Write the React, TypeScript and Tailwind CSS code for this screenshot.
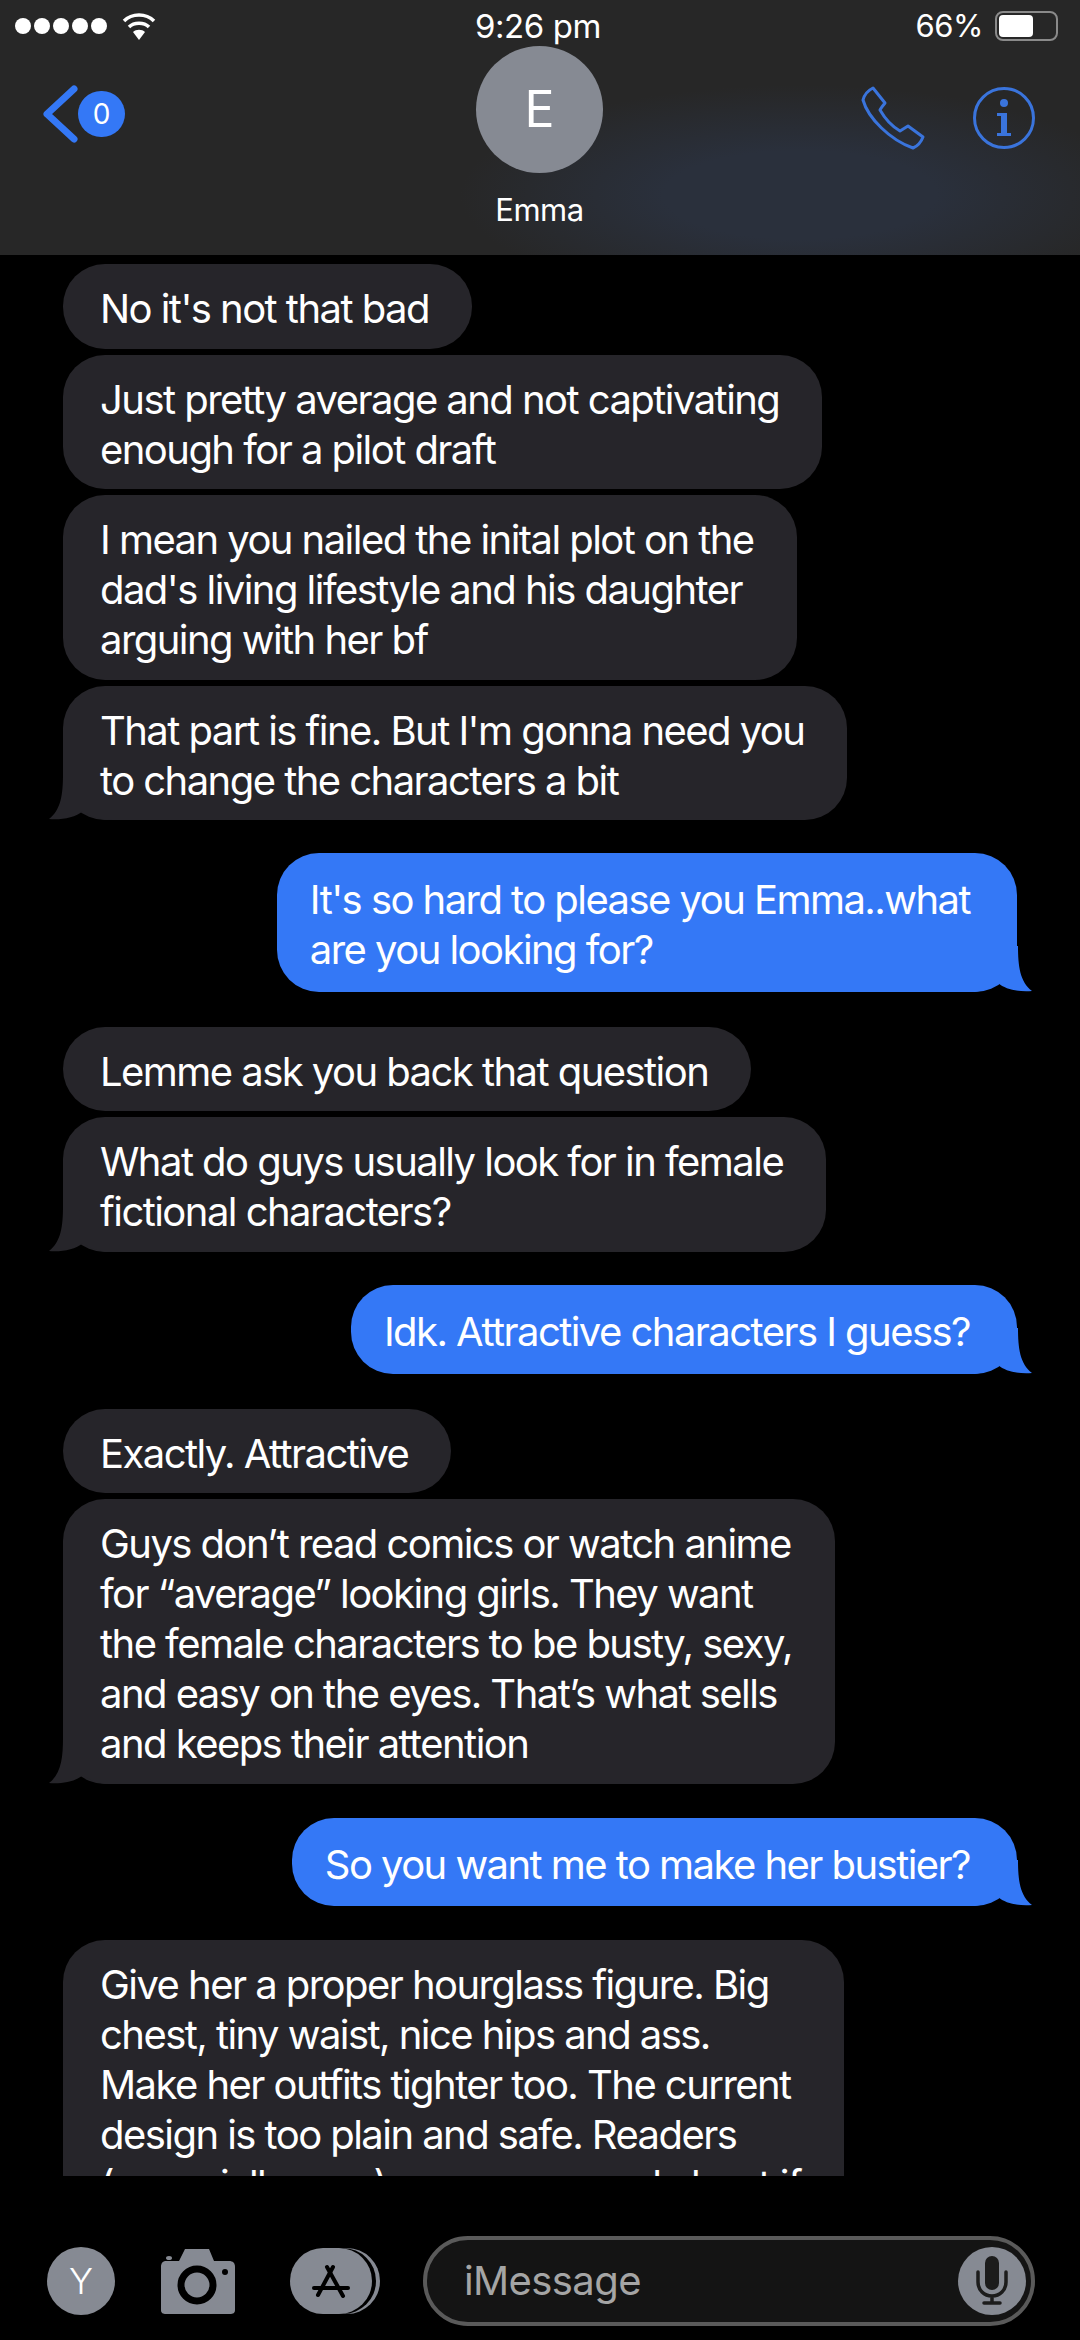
import React from 'react';

const font = "font-['Inter','Liberation_Sans',sans-serif]";

const Tail = ({ sent }: { sent: boolean }) => (
    <svg
        viewBox="0 0 64 46"
        className={`absolute bottom-0 h-[46px] w-[64px] ${sent ? '-right-[15px] -scale-x-100' : '-left-[14px]'}`}
        fill={sent ? '#3478f6' : '#26252a'}
    >
        <path d="M14 0C14 20 12 36 0 45C12 46 26 44 34 37C42 43 50 46 64 46V0Z" />
    </svg>
);

const Bubble = ({ text, sent = false, tail = false, className = '' }: { text: string; sent?: boolean; tail?: boolean; className?: string }) => (
    <div
        className={`relative w-fit whitespace-pre rounded-[42px] text-[40px] leading-[50px] tracking-[-1.55px] text-white ${
            sent ? 'self-end bg-[#3478f6] pb-[16.5px] pl-[33px] pr-[47px] pt-[22px]' : 'bg-[#26252a] pb-[14.5px] pl-[37px] pr-[43px] pt-[20px]'
        } ${className}`}
    >
        {tail && <Tail sent={sent} />}
        <span className="relative">{text}</span>
    </div>
);

const StatusBar = () => (
    <div className="flex h-[46px] items-center justify-between pl-[15px] pr-[22px] pt-[6px] text-white">
        <div className="flex w-[300px] items-center">
            <div className="flex gap-[3px]">
                <span className="h-[16px] w-[16px] rounded-full bg-white" />
                <span className="h-[16px] w-[16px] rounded-full bg-white" />
                <span className="h-[16px] w-[16px] rounded-full bg-white" />
                <span className="h-[16px] w-[16px] rounded-full bg-white" />
                <span className="h-[16px] w-[16px] rounded-full bg-white" />
            </div>
            <svg viewBox="0 0 34 28" className="ml-[15px] h-[28px] w-[34px]" fill="none" stroke="#fff" strokeWidth="3.5">
                <path d="M2 9C10 1 24 1 32 9" />
                <path d="M7 15C12 10 22 10 27 15" />
                <path d="M17 28L11 20C14 17 20 17 23 20Z" fill="#fff" stroke="none" />
            </svg>
        </div>
        <div className="ml-[3px] text-[33px] leading-[40px] tracking-[-0.4px]">9:26 pm</div>
        <div className="flex w-[300px] items-center justify-end">
            <span className="text-[31px] leading-[40px] tracking-[-0.5px]">66%</span>
            <div className="ml-[12px] flex h-[30px] w-[63px] rounded-[8px] border-2 border-[#8a8a8a] p-[2px]">
                <div className="h-full w-[62%] rounded-[4px] bg-white" />
            </div>
        </div>
    </div>
);

const Header = () => (
    <div className="h-[255px] shrink-0 bg-[#272727] bg-[radial-gradient(ellipse_340px_110px_at_800px_195px,#2a303c_40%,#272727_100%)]">
        <StatusBar />
        <div className="flex items-start justify-between pl-[42px] pr-[45px] pt-[39px]">
            <div className="flex w-[200px] items-center">
                <svg viewBox="0 0 36 58" className="h-[58px] w-[36px]" fill="none" stroke="#3478f6" strokeWidth="7" strokeLinecap="round" strokeLinejoin="round">
                    <path d="M32 4L5 29L32 54" />
                </svg>
                <div className="flex h-[46px] w-[47px] items-center justify-center rounded-full bg-[#3478f6] text-[28px] text-white">0</div>
            </div>
            <div className="-mt-[39px] ml-[2px] flex flex-col items-center">
                <div className="flex h-[127px] w-[127px] items-center justify-center rounded-full bg-[#868a93] text-[50px] text-white">E</div>
                <div className="mt-[17px] text-[31px] leading-[40px] tracking-[-0.5px] text-white">Emma</div>
            </div>
            <div className="flex w-[200px] items-center justify-end gap-[46px]">
                <svg viewBox="20 15 67 65" className="h-[65px] w-[67px]" fill="none" stroke="#3a74dc" strokeWidth="3" strokeLinejoin="round">
                    <path d="M33 18L45 33Q41 38 40 40Q48 54 60 61L68 56L83 67Q80 75 73 78C50 70 28 48 23 30Q25 22 33 18Z" />
                </svg>
                <svg viewBox="0 0 62 62" className="h-[62px] w-[62px]">
                    <circle cx="31" cy="31" r="29.5" fill="none" stroke="#3a74dc" strokeWidth="3" />
                    <circle cx="31" cy="16" r="4" fill="#3a74dc" />
                    <path d="M24 26H34V46H38V49H24V46H28V29H24Z" fill="#3a74dc" />
                </svg>
            </div>
        </div>
    </div>
);

const Composer = () => (
    <div className="flex h-[164px] shrink-0 items-center pl-[47px] pt-[46px]">
        <div className="flex h-[68px] w-[68px] items-center justify-center rounded-full bg-[#868a93] text-[36px] font-light text-white">Y</div>
        <svg viewBox="20 12 78 67" className="ml-[44px] h-[67px] w-[78px]">
            <path
                fill="#868a93"
                d="M46 13H70L75 25H90C94 25 96 27 96 31V74C96 77 94 78 91 78H27C24 78 22 77 22 74V31C22 27 24 25 27 25H40Z"
            />
            <circle cx="58" cy="49" r="16" fill="none" stroke="#000" strokeWidth="7" />
            <circle cx="86" cy="36" r="3" fill="#000" />
            <ellipse cx="30" cy="22" rx="3" ry="2" fill="#868a93" />
        </svg>
        <div className="relative ml-[53px] h-[66px] w-[91px]">
            <div className="absolute left-[13px] top-0 h-[66px] w-[77px] rounded-full bg-[#868a93]" />
            <div className="absolute left-[9px] top-0 h-[66px] w-[77px] rounded-full bg-[#000]" />
            <div className="absolute left-0 top-0 flex h-[66px] w-[82px] items-center justify-center rounded-full bg-[#868a93]">
                <svg viewBox="170 26 42 36" className="h-[36px] w-[42px]" fill="none" stroke="#000" strokeWidth="4" strokeLinecap="round">
                    <path d="M193 30L178 58" />
                    <path d="M187 30L203 59" />
                    <path d="M174 51H208" />
                </svg>
            </div>
        </div>
        <div className="ml-[42px] flex h-[90px] w-[612px] items-center justify-between rounded-full border-[4px] border-[#5a5a5a] bg-[#141414] pl-[37px] pr-[5px]">
            <span className="text-[40px] tracking-[-0.6px] text-[#a5a5a5]">iMessage</span>
            <div className="flex h-[68px] w-[68px] items-center justify-center rounded-full bg-[#868a93]">
                <svg viewBox="0 0 34 50" className="h-[50px] w-[34px]" fill="none" stroke="#1c1c1c" strokeWidth="3.5" strokeLinecap="round">
                    <rect x="10" y="0" width="14" height="34" rx="7" fill="#1c1c1c" stroke="none" />
                    <path d="M3 16V26C3 34 9 40 17 40C25 40 31 34 31 26V16M17 40V47M9 47H25" />
                </svg>
            </div>
        </div>
    </div>
);

const App: React.FC = () => {
    return (
        <div className={`flex h-[2340px] w-[1080px] flex-col overflow-hidden bg-black ${font}`}>
            <Header />
            <div className="h-[1921px] shrink-0 overflow-hidden">
                <div className="flex flex-col gap-[6px] pl-[63px] pr-[63px] pt-[9px]">
                    <Bubble text="No it's not that bad" />
                    <Bubble text={"Just pretty average and not captivating\nenough for a pilot draft"} />
                    <Bubble text={"I mean you nailed the inital plot on the\ndad's living lifestyle and his daughter\narguing with her bf"} />
                    <Bubble tail text={"That part is fine. But I'm gonna need you\nto change the characters a bit"} />

                    <Bubble sent tail className="mt-[27px]" text={"It's so hard to please you Emma..what\nare you looking for?"} />

                    <Bubble className="mt-[29px]" text="Lemme ask you back that question" />
                    <Bubble tail text={"What do guys usually look for in female\nfictional characters?"} />

                    <Bubble sent tail className="mt-[27.5px]" text="Idk. Attractive characters I guess?" />

                    <Bubble className="mt-[29px]" text="Exactly. Attractive" />
                    <Bubble
                        tail
                        text={"Guys don\u2019t read comics or watch anime\nfor \u201caverage\u201d looking girls. They want\nthe female characters to be busty, sexy,\nand easy on the eyes. That\u2019s what sells\nand keeps their attention"}
                    />

                    <Bubble sent tail className="mt-[28px]" text="So you want me to make her bustier?" />

                    <Bubble
                        className="mt-[28px]"
                        text={"Give her a proper hourglass figure. Big\nchest, tiny waist, nice hips and ass.\nMake her outfits tighter too. The current\ndesign is too plain and safe. Readers\n(especially men) are gonna read about if"}
                    />
                </div>
            </div>
            <Composer />
        </div>
    );
};

export default App;
